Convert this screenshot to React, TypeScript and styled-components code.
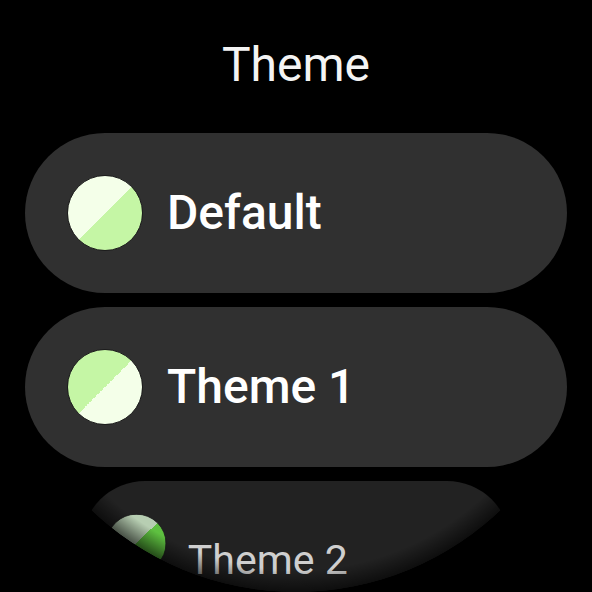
import { FC } from 'react';
import styled, { createGlobalStyle } from 'styled-components';

const GlobalStyle = createGlobalStyle({
  'html, body': {
    margin: 0,
    padding: 0,
    background: '#000',
  },
  body: {
    fontFamily: 'Roboto, "Noto Sans", sans-serif',
  },
});

// Round watch display
const Screen = styled.div({
  width: 592,
  height: 592,
  background: '#000',
  overflow: 'hidden',
  clipPath: 'circle(296px at 50% 50%)',
  display: 'flex',
  flexDirection: 'column',
  alignItems: 'center',
  position: 'relative',
});

const Title = styled.div({
  marginTop: 37,
  fontSize: 48,
  lineHeight: '56px',
  fontWeight: 400,
  color: '#f4f4f4',
});

const List = styled.div({
  marginTop: 40,
  display: 'flex',
  flexDirection: 'column',
  alignItems: 'center',
  gap: 14,
});

// items near the bottom edge shrink and dim, as in a scaling list
const Chip = styled.div<{ $faded?: boolean }>(({ $faded }) => ({
  width: 542,
  height: 160,
  flexShrink: 0,
  boxSizing: 'border-box',
  borderRadius: 80,
  background: $faded ? '#222' : '#303030',
  display: 'flex',
  alignItems: 'center',
  gap: $faded ? 27 : 24,
  paddingLeft: $faded ? 31 : 42,
  transform: $faded ? 'scale(0.79, 0.78)' : 'none',
  transformOrigin: 'top center',
}));

const Swatch = styled.div<{ $first: string; $second: string }>(
  ({ $first, $second }) => ({
    width: 76,
    height: 76,
    flexShrink: 0,
    borderRadius: '50%',
    boxSizing: 'border-box',
    border: '1.5px solid #1c1c1c',
    background: `linear-gradient(135deg, ${$first} 50%, ${$second} 50%)`,
  })
);

const Label = styled.span<{ $faded?: boolean }>(({ $faded }) => ({
  fontSize: $faded ? 52 : 48,
  lineHeight: '56px',
  fontWeight: $faded ? 400 : 500,
  color: $faded ? '#cfcfcf' : '#fff',
  marginTop: $faded ? 44 : 0,
}));

// soft shading along the lower rim of the round screen
const BottomShade = styled.div({
  position: 'absolute',
  left: 0,
  right: 0,
  bottom: 0,
  height: 120,
  pointerEvents: 'none',
  background:
    'radial-gradient(circle 296px at 50% -176px, transparent 274px, rgba(0,0,0,0.6) 296px)',
});

const CREAM = '#f4ffe9';
const MINT = '#c5f6a5';

const themes = [
  { name: 'Default', first: CREAM, second: MINT },
  { name: 'Theme 1', first: MINT, second: CREAM },
];

const App: FC = () => (
  <>
    <GlobalStyle />
    <Screen>
      <Title>Theme</Title>
      <List>
        {themes.map(theme => (
          <Chip key={theme.name}>
            <Swatch $first={theme.first} $second={theme.second} />
            <Label>{theme.name}</Label>
          </Chip>
        ))}
        <Chip $faded>
          <Swatch $first="#b7ceb2" $second="#5ec040" />
          <Label $faded>Theme 2</Label>
        </Chip>
      </List>
      <BottomShade />
    </Screen>
  </>
);

export default App;
